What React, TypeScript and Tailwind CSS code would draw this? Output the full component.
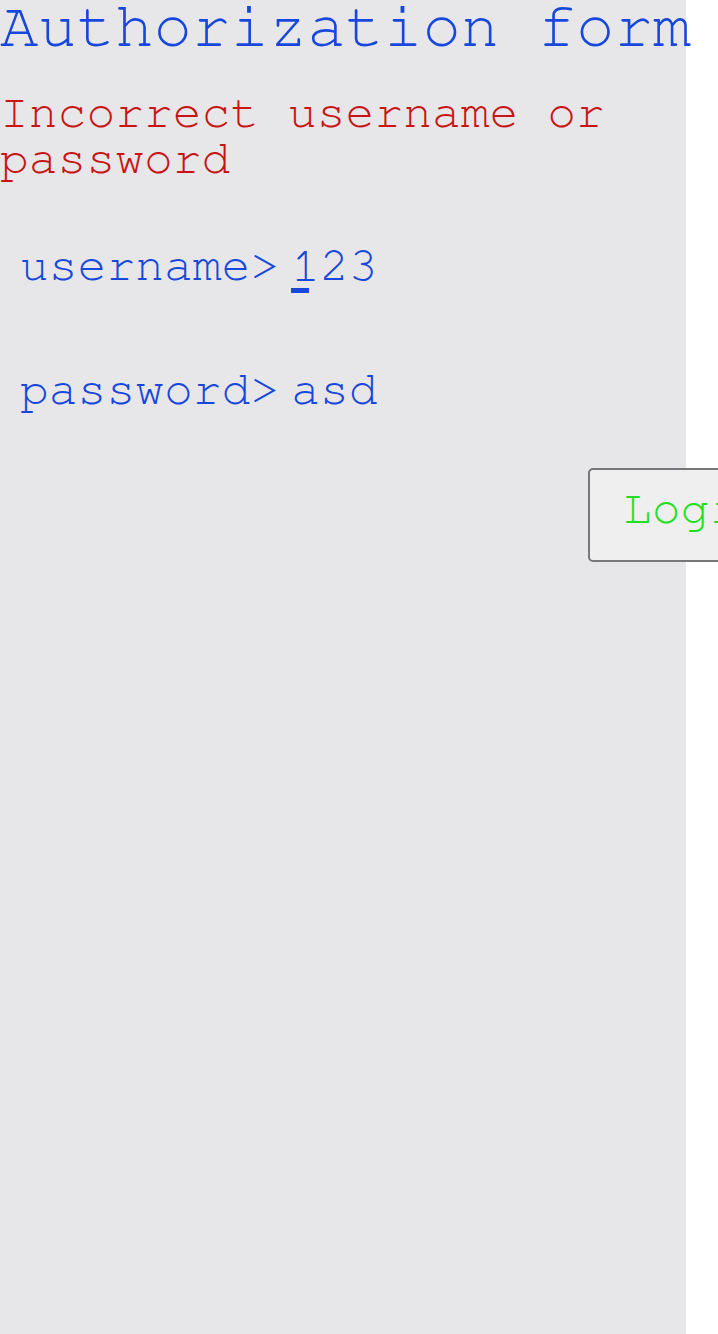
export default function App() {
  return (
    <div className="w-[718px] h-[1334px] overflow-hidden bg-white font-['FreeMono',monospace]">
      <div className="w-[686px] min-h-[1334px] bg-[#e7e7ea] flex flex-col">
        <h1 className="text-[64px] leading-[54px] text-[#1747dc] whitespace-nowrap">Authorization form</h1>
        <p className="mt-[36px] text-[48px] leading-[46px] text-[#c81414]">Incorrect username or password</p>
        <div className="mt-[60px] ml-[20px] flex items-baseline text-[48px] leading-[48px] text-[#1747dc]">
          <span>username&gt;</span>
          <span className="relative ml-[12px]">
            123
            <span className="absolute left-0 top-[46px] w-[18px] h-[5px] bg-[#1747dc]" />
          </span>
        </div>
        <div className="mt-[76px] ml-[20px] flex items-baseline text-[48px] leading-[48px] text-[#1747dc]">
          <span>password&gt;</span>
          <span className="ml-[12px]">asd</span>
        </div>
        <div className="mt-[54px] flex">
          <button className="ml-[588px] shrink-0 px-[33px] pt-[15px] pb-[27px] border-2 border-[#777777] rounded-[5px] bg-[#efefef] text-[48px] leading-[48px] text-[#1ee01e] whitespace-nowrap">
            Login
          </button>
        </div>
      </div>
    </div>
  );
}
